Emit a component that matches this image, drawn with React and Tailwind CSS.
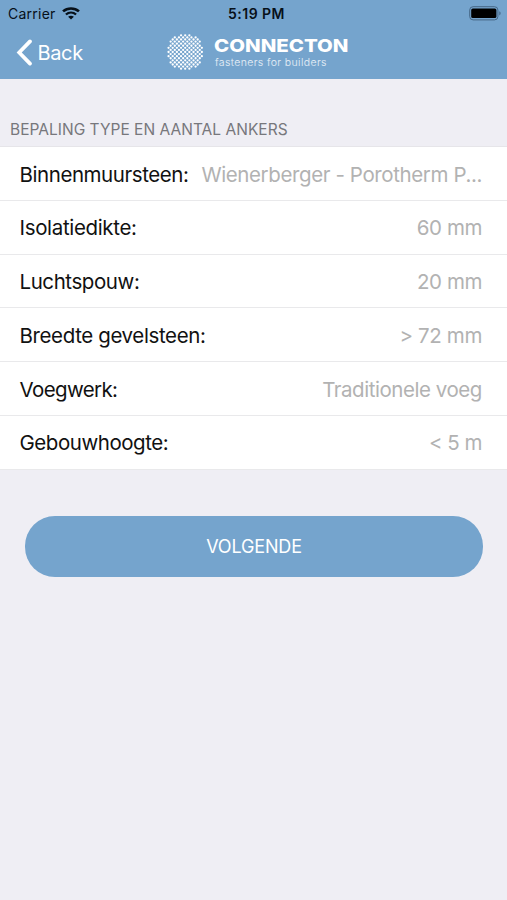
import React from 'react';

const rows = [
    { label: 'Binnenmuursteen:', value: 'Wienerberger - Porotherm P...', labelClass: 'tracking-[-0.43px]', valueClass: 'tracking-[-0.39px]' },
    { label: 'Isolatiedikte:', value: '60 mm', labelClass: 'tracking-[-0.34px]', valueClass: 'tracking-[-0.4px]' },
    { label: 'Luchtspouw:', value: '20 mm', labelClass: 'tracking-[-0.42px]', valueClass: 'tracking-[-0.4px]' },
    { label: 'Breedte gevelsteen:', value: '> 72 mm', labelClass: 'tracking-[-0.38px]', valueClass: 'tracking-[-0.36px]' },
    { label: 'Voegwerk:', value: 'Traditionele voeg', labelClass: 'tracking-[-0.62px]', valueClass: 'tracking-[-0.45px]' },
    { label: 'Gebouwhoogte:', value: '< 5 m', labelClass: 'tracking-[-0.46px]', valueClass: 'tracking-[-0.5px]' },
];

// Staggered dot lattice, clipped to a disc
const logoDots = [];
for (let r = -9; r <= 9; r++) {
    for (let c = -9; c <= 9; c++) {
        const x = c * 2.08;
        const y = r * 2.08;
        if ((r + c) % 2 === 0 && x * x + y * y <= 18.4 * 18.4) {
            logoDots.push({ x: x + 19.2, y: y + 19 });
        }
    }
}

const WifiIcon = () => (
    <svg className="ml-[6px] h-[13px] w-[18px]" viewBox="0 0 17 13" preserveAspectRatio="none" fill="none" stroke="#071019">
        <path d="M1 4.4C5.2 0.5 11.8 0.5 16 4.4" strokeWidth="2.5" />
        <path d="M3.7 7.5C6.5 5 10.5 5 13.3 7.5" strokeWidth="2.2" />
        <path d="M8.5 12.6L5.8 9.8C7.4 8.4 9.6 8.4 11.2 9.8Z" fill="#071019" stroke="none" />
    </svg>
);

const BatteryIcon = () => (
    <svg className="h-[15px] w-[33px]" viewBox="0 0 33 15">
        <rect x="0.7" y="0.7" width="28.2" height="13.2" rx="3.4" fill="none" stroke="#466786" strokeWidth="1" />
        <rect x="2.2" y="2.5" width="25.2" height="9.6" rx="1.6" fill="#000" />
        <path d="M30.3 5.2C32.1 5.8 32.1 8.8 30.3 9.4Z" fill="#466786" />
    </svg>
);

const StatusBar = () => (
    <div className="grid h-[27px] grid-cols-3 items-center text-[#071019]">
        <div className="flex items-center pl-[8px]">
            <span className="text-[14px] leading-none tracking-[0.25px]">Carrier</span>
            <WifiIcon />
        </div>
        <div className="pl-[6px] text-center text-[14px] leading-none font-semibold tracking-[0.45px]">5:19 PM</div>
        <div className="flex justify-end pr-[5px]">
            <BatteryIcon />
        </div>
    </div>
);

const Logo = () => (
    <div className="flex items-start">
        <svg className="h-[38px] w-[38px]" viewBox="0 0 38 38" fill="#fff">
            {logoDots.map((dot) => (
                <circle key={`${dot.x}-${dot.y}`} cx={dot.x} cy={dot.y} r="1.15" />
            ))}
        </svg>
        <div className="mt-[4px] ml-[10px] whitespace-nowrap text-white">
            <div className="origin-left scale-x-[1.135] text-[18px] leading-[18px] font-extrabold">CONNECTON</div>
            <div className="pl-[1px] text-[10.5px] leading-[16px] font-light tracking-[0.38px] text-white/85">fasteners for builders</div>
        </div>
    </div>
);

const App = () => {
    return (
        <div className="h-[900px] w-[507px] overflow-hidden bg-[#efeef4] font-['Inter','Liberation_Sans',sans-serif]">
            <header className="h-[79px] bg-[#75a4cd]">
                <StatusBar />
                <div className="flex h-[52px] items-start">
                    <button type="button" className="flex w-[166px] items-start pt-[12px] pl-[15.5px] text-white">
                        <svg className="h-[27px] w-[17px]" viewBox="0 0 17 27" fill="none" stroke="#fff" strokeWidth="3.7" strokeLinecap="round">
                            <path d="M14 2.4L3.2 13.5L14 24.6" />
                        </svg>
                        <span className="ml-[5px] text-[20px] leading-[28px] tracking-[-0.35px]">Back</span>
                    </button>
                    <div className="pt-[6px]">
                        <Logo />
                    </div>
                </div>
            </header>

            <h2 className="h-[67px] pt-[41px] pl-[10px] text-[15.5px] leading-[20px] tracking-[0.02px] text-[#77777c]">
                BEPALING TYPE EN AANTAL ANKERS
            </h2>

            <ul className="border-t border-[#e6e5e9] bg-white">
                {rows.map((row) => (
                    <li key={row.label} className="flex h-[53.75px] items-center justify-between border-b border-[#e9e9eb] pt-[3px] pr-[25px] pl-[19.5px] text-[20.5px] whitespace-nowrap">
                        <span className={`text-[#111] ${row.labelClass}`}>{row.label}</span>
                        <span className={`text-[#b2b2b2] ${row.valueClass}`}>{row.value}</span>
                    </li>
                ))}
            </ul>

            <button type="button" className="mt-[46.5px] ml-[25px] block h-[61px] w-[458px] rounded-[30px] bg-[#75a4cd] text-[18px] tracking-[-0.15px] text-white">
                VOLGENDE
            </button>
        </div>
    );
};

export default App;
